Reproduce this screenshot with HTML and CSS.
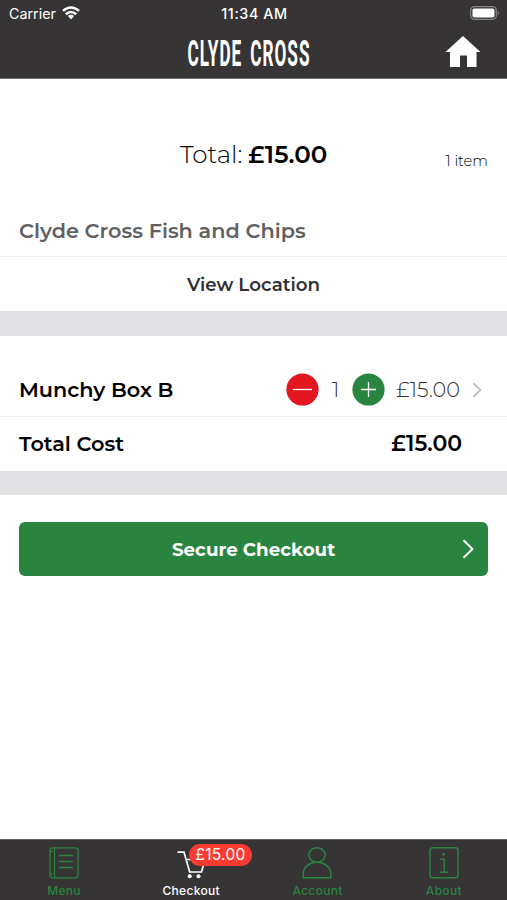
FILE: index.html
```html
<!DOCTYPE html>
<html lang="en">
<head>
<meta charset="utf-8">
<title>Checkout</title>
<link rel="stylesheet" href="styles.css">
</head>
<body>
<header class="header">
  <div class="status">
    <div class="carrier"><span>Carrier</span>
      <svg width="18" height="14" viewBox="0 0 18 14" fill="none" stroke="#fff" stroke-width="2.5"><path d="M1 4.9Q9-1.9 17 4.9M3.8 8.2Q9 3.7 14.2 8.2"/><path d="M5.9 10Q9 7.5 12.1 10L9 13.4Z" fill="#fff" stroke="none"/></svg>
    </div>
    <span class="time">11:34 AM</span>
    <svg class="battery" width="30" height="14" viewBox="0 0 30 14"><rect x=".7" y=".7" width="25.6" height="12.6" rx="3.6" fill="none" stroke="#858386" stroke-width="1.2"/><rect x="2.5" y="2.5" width="22" height="9" rx="1.8" fill="#fff"/><path d="M27.7 4.5Q30 7 27.7 9.5Z" fill="#858386"/></svg>
  </div>
  <div class="brand-row">
    <div class="logo"><span>CLYDE CROSS</span></div>
    <svg class="home" width="36" height="32" viewBox="0 0 36 32" fill="#fff"><path d="M18 0 35.5 16H31.5V31H22V19.5H15V31H5V16H.5Z"/></svg>
  </div>
</header>
<main>
  <section class="total">
    <div class="total-sum"><span class="total-label">Total:</span><strong class="total-price">£15.00</strong></div>
    <span class="items">1 item</span>
  </section>
  <h1 class="shop">Clyde Cross Fish and Chips</h1>
  <div class="location">View Location</div>
  <div class="band"></div>
  <section class="row product">
    <span>Munchy Box B</span>
    <div class="controls">
      <svg width="33" height="33" viewBox="0 0 33 33"><circle cx="16.5" cy="16.5" r="16.1" fill="#e21720"/><path d="M7 16.5H26" stroke="#fff" stroke-width="1.3"/></svg>
      <span class="qty">1</span>
      <svg width="33" height="33" viewBox="0 0 33 33"><circle cx="16.5" cy="16.5" r="16.1" fill="#28843f"/><path d="M9 16.5H24M16.5 9V24" stroke="#fff" stroke-width="1.3"/></svg>
      <span class="price">£15.00</span>
      <svg class="more" width="10" height="16" viewBox="0 0 10 16" fill="none" stroke="#c2c2c4" stroke-width="2"><path d="m1.5 1.2 6.8 6.8-6.8 6.8"/></svg>
    </div>
  </section>
  <section class="row cost"><span>Total Cost</span><strong class="cost-price">£15.00</strong></section>
  <div class="band band-end"></div>
  <button class="checkout"><span class="checkout-label">Secure Checkout</span>
    <svg class="go" width="13" height="20" viewBox="0 0 13 20" fill="none" stroke="#fff" stroke-width="1.9"><path d="m1.5 1.3 9 8.7-9 8.7"/></svg>
  </button>
</main>
<nav class="tabs">
  <a class="tab"><svg width="32" height="34" viewBox="0 0 32 34" fill="none" stroke="#28843f" stroke-width="1.3"><rect x="2" y="1.8" width="28" height="30" rx="2.5"/><path d="M6.5 2V32M2 5.5H4.5M2 28H4.5M11 9.5H25M11 15.5H25M11 21.5H25"/></svg><span>Menu</span></a>
  <a class="tab active"><svg width="32" height="34" viewBox="0 0 32 34" fill="none" stroke="#fff" stroke-width="1.7"><path d="M2.5 6.2H9L14.7 26H26.5L30 13.5H11"/><g fill="#fff" stroke="none"><circle cx="14.7" cy="30.2" r="2"/><circle cx="23.5" cy="30.2" r="2"/></g></svg><span>Checkout</span><b class="badge">£15.00</b></a>
  <a class="tab"><svg width="32" height="34" viewBox="0 0 32 34" fill="none" stroke="#28843f" stroke-width="1.5"><ellipse cx="16" cy="9" rx="8.2" ry="7.3"/><path d="M2.2 31.7V28C2.2 20.7 9 16.3 16 16.3S29.8 20.7 29.8 28V31.7Z"/></svg><span>Account</span></a>
  <a class="tab"><svg width="32" height="34" viewBox="0 0 32 34" fill="none" stroke="#28843f" stroke-width="1.4"><rect x="2" y="1.8" width="28" height="30" rx="2.5"/><path d="M12.5 13.3H16.2V26.2M12 26.2H20"/><circle cx="15.7" cy="8.3" r="1.3" fill="#28843f" stroke="none"/></svg><span>About</span></a>
</nav>
</body>
</html>
```
FILE: styles.css
```css
* { box-sizing: border-box; }
body { margin: 0; width: 507px; height: 900px; display: flex; flex-direction: column; background: #fff; color: #000; font-family: Montserrat, Inter, sans-serif; overflow: hidden; }
main { flex: 1; white-space: nowrap; }
.header { height: 79px; background: #373436; color: #fff; border-bottom: 1px solid #777577; }
.status { height: 28px; padding: 0 7px 0 9px; display: grid; grid-template-columns: 1fr auto 1fr; align-items: center; font: 500 14px/28px Inter, sans-serif; }
.carrier { display: flex; align-items: center; gap: 6.5px; font-weight: 400; font-size: 14.3px; }
.carrier svg { margin-bottom: 2px; }
.time { font-size: 14.3px; font-weight: 500; letter-spacing: .6px; }
.battery { justify-self: end; margin-bottom: 2px; }
.brand-row { height: 50px; display: grid; grid-template-columns: 1fr 128px 1fr; padding: 0 26px 0 20px; align-items: start; }
.logo { grid-column: 2; margin-top: 5px; display: flex; justify-content: center; white-space: nowrap; }
.logo span { font: 700 36px/42px Roboto, sans-serif; letter-spacing: 2px; word-spacing: 6px; transform: translateX(-1.5px) scaleX(.478); }
.home { justify-self: end; margin-top: 8px; }
.total { height: 126px; display: grid; grid-template-columns: 1fr auto 1fr; align-items: center; padding: 23px 19px 0; }
.total-sum { grid-column: 2; display: flex; gap: 6px; font-size: 24.5px; }
.total-label { font-weight: 300; }
.total-price { font-weight: 600; }
.items { justify-self: end; font-size: 14.7px; font-weight: 300; margin-top: 14px; }
.shop { height: 52px; margin: 0; padding-left: 19px; border-bottom: 1px solid #f0f0f1; font-size: 20.8px; line-height: 51px; font-weight: 600; color: #616163; }
.location { height: 54px; text-align: center; font-size: 18.3px; line-height: 55px; font-weight: 600; color: #303032; }
.band { height: 25px; background: #e2e2e4; }
.band-end { height: 24px; }
.row { display: flex; justify-content: space-between; padding-left: 19px; font-size: 20.8px; font-weight: 600; align-items: center; }
.product { height: 81px; padding-top: 27px; border-bottom: 1px solid #f0f0f1; padding-right: 25px; }
.cost { height: 54px; padding-right: 45px; padding-bottom: 1px; }
.cost-price { font-size: 22px; font-weight: 600; }
.controls { display: flex; align-items: center; font-size: 20.8px; font-weight: 300; color: #303032; }
.qty { width: 33px; text-align: center; }
.price { margin-left: 11px; }
.more { margin-left: 12px; }
.checkout { display: grid; grid-template-columns: 1fr auto 1fr; align-items: center; width: 469px; height: 54px; margin: 27px 19px 0; padding: 0 13px; border: 0; border-radius: 6px; background: #28843f; color: #fff; font: 700 18.3px Montserrat, Inter, sans-serif; }
.checkout-label { grid-column: 2; }
.go { justify-self: end; }
.tabs { height: 61px; background: #373436; border-top: 1px solid #656365; display: grid; grid-template-columns: 128px repeat(3, 1fr); font: 500 12px/14px Inter, sans-serif; color: #28843f; }
.tab { position: relative; display: flex; flex-direction: column; align-items: center; padding-top: 6px; letter-spacing: .3px; }
.tab span { margin-top: 4px; }
.active { color: #fff; }
.badge { position: absolute; left: 61px; top: 4px; width: 63px; height: 22px; border-radius: 11px; background: #fe3b30; text-align: center; font: 400 15.5px/22px Inter, sans-serif; }
```
